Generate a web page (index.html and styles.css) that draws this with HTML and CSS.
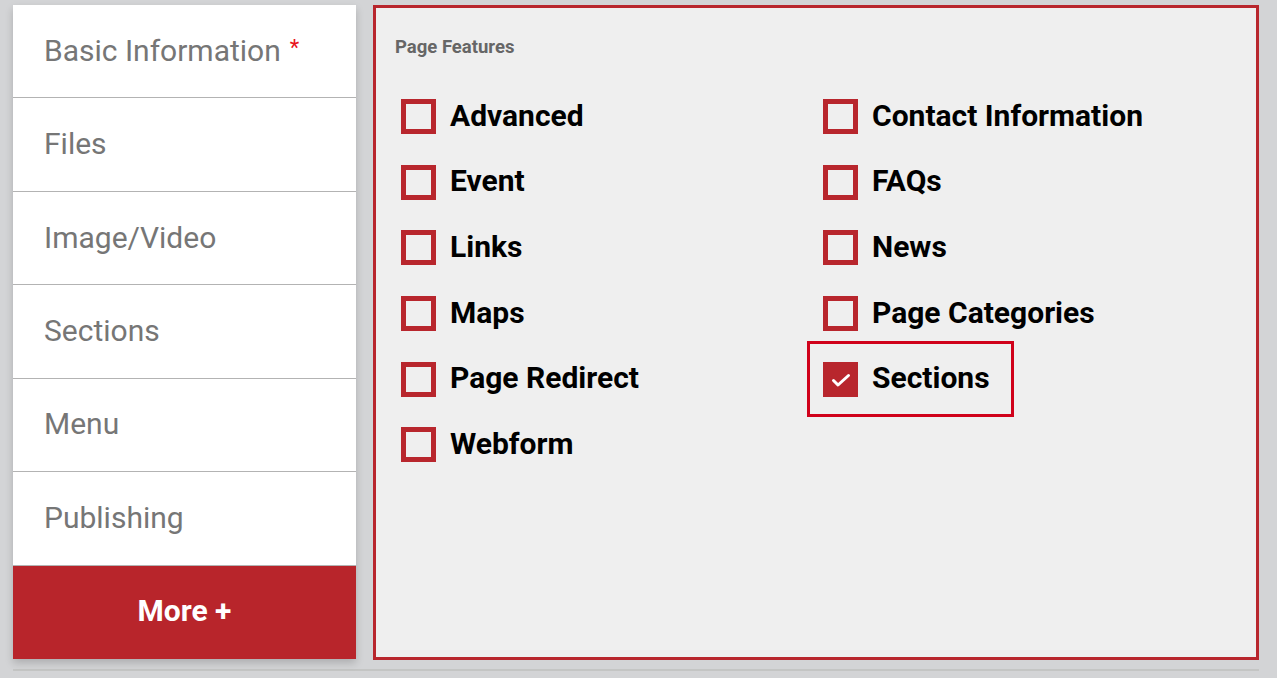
FILE: index.html
```html
<!DOCTYPE html>
<html>
<head>
<meta charset="utf-8">
<link rel="stylesheet" href="styles.css">
</head>
<body>
<div class="page">
  <div class="layout">
    <nav class="menu">
      <div class="menu-item">Basic Information <span class="req">*</span></div>
      <div class="menu-item">Files</div>
      <div class="menu-item">Image/Video</div>
      <div class="menu-item">Sections</div>
      <div class="menu-item">Menu</div>
      <div class="menu-item">Publishing</div>
      <div class="menu-more">More +</div>
    </nav>
    <section class="features">
      <h3 class="features-title">Page Features</h3>
      <div class="feature-grid">
        <div class="feature-col">
          <label class="feature"><span class="box"></span><span class="feature-label">Advanced</span></label>
          <label class="feature"><span class="box"></span><span class="feature-label">Event</span></label>
          <label class="feature"><span class="box"></span><span class="feature-label">Links</span></label>
          <label class="feature"><span class="box"></span><span class="feature-label">Maps</span></label>
          <label class="feature"><span class="box"></span><span class="feature-label">Page Redirect</span></label>
          <label class="feature"><span class="box"></span><span class="feature-label">Webform</span></label>
        </div>
        <div class="feature-col">
          <label class="feature"><span class="box"></span><span class="feature-label">Contact Information</span></label>
          <label class="feature"><span class="box"></span><span class="feature-label">FAQs</span></label>
          <label class="feature"><span class="box"></span><span class="feature-label">News</span></label>
          <label class="feature"><span class="box"></span><span class="feature-label">Page Categories</span></label>
          <label class="feature focused"><span class="box checked"><svg viewBox="0 0 35 35" width="35" height="35"><polyline points="10.5,18.5 15,23 25.5,13.5" fill="none" stroke="#fff" stroke-width="3" stroke-linecap="round" stroke-linejoin="round"/></svg></span><span class="feature-label">Sections</span></label>
        </div>
      </div>
    </section>
  </div>
</div>
</body>
</html>
```
FILE: styles.css
```css
html, body {
  margin: 0;
  padding: 0;
  background: #d3d4d6;
  font-family: Roboto, "Liberation Sans", Arial, sans-serif;
}

.page {
  width: 1246px;
  margin-left: 13px;
  padding-top: 5px;
  padding-bottom: 9px;
  border-bottom: 2px solid #c4c5c4;
}

.layout {
  display: flex;
  gap: 17px;
  height: 655px;
}

.menu {
  flex: none;
  width: 343px;
  height: 654px;
  display: flex;
  flex-direction: column;
  background: #fff;
  box-shadow: 0 4px 8px rgba(0, 0, 0, 0.18);
}

.menu-item,
.menu-more {
  flex: 1 1 0;
  display: flex;
  align-items: center;
  padding-bottom: 2px;
  font-size: 30px;
}

.menu-item {
  padding-left: 31px;
  color: #767676;
  border-bottom: 1px solid #b3b3b3;
}

.req {
  color: #e8141b;
  font-size: 22px;
  margin-left: 9px;
  position: relative;
  top: -3px;
}

.menu-more {
  justify-content: center;
  background: #b8252b;
  color: #fff;
  font-weight: 700;
  border-bottom: 1px solid #b8252b;
}

.features {
  flex: 1;
  min-width: 0;
  box-sizing: border-box;
  background: #efefef;
  border: 3px solid #b8262d;
  padding: 29px 19px 0 19px;
}

.features-title {
  margin: 0;
  font-size: 18.5px;
  line-height: 21px;
  font-weight: 700;
  color: #666;
}

.feature-grid {
  margin-top: 41px;
  margin-left: 6px;
  display: grid;
  grid-template-columns: 422px 1fr;
}

.feature-col {
  display: flex;
  flex-direction: column;
  gap: 30.7px;
}

.feature {
  display: flex;
  align-items: center;
  gap: 14px;
  height: 35px;
  align-self: flex-start;
}

.focused {
  position: relative;
}

.focused::after {
  content: "";
  position: absolute;
  top: -21px;
  bottom: -20px;
  left: -16px;
  right: -24px;
  border: 3px solid #d0021b;
}

.box {
  width: 35px;
  height: 35px;
  box-sizing: border-box;
  border: 5px solid #b8262d;
  flex: none;
}

.box.checked {
  border: none;
  background: #b8262d;
}

.box svg {
  display: block;
}

.feature-label {
  font-size: 30px;
  font-weight: 700;
  color: #000;
  line-height: 35px;
  padding-bottom: 3px;
}
```
